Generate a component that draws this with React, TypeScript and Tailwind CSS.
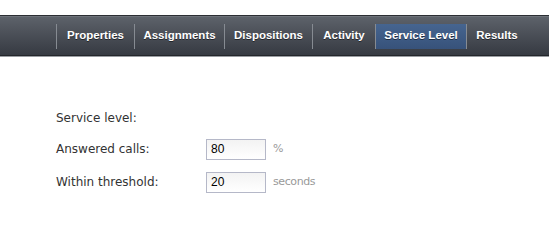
import React from "react";

const tabs: { label: string; w: string }[] = [
  { label: "Properties", w: "w-[78px]" },
  { label: "Assignments", w: "w-[90px]" },
  { label: "Dispositions", w: "w-[88px]" },
  { label: "Activity", w: "w-[63px]" },
  { label: "Service Level", w: "w-[91px]" },
  { label: "Results", w: "w-[61px]" },
];

export default function App() {
  return (
    <div className="w-[549px] h-[242px] bg-white overflow-hidden" style={{ fontFamily: "'DejaVu Sans', sans-serif" }}>
      <div className="h-[15px]" />
      <div className="h-[42px] border-t border-[#2b2e33] border-b border-b-[#9a9da2] bg-gradient-to-b from-[#5e636b] to-[#353941] shadow-[inset_0_-1px_0_#23262b,inset_0_1px_0_#6e737a] flex items-center pl-[56px]">
        {tabs.map((t) => (
          <div
            key={t.label}
            className={
              t.w +
              " h-[25px] flex items-center justify-center border-l border-[#868b92] text-white font-bold text-[11.5px] whitespace-nowrap " +
              (t.label === "Service Level" ? "bg-gradient-to-b from-[#466590] to-[#37527a]" : "")
            }
            style={{ fontFamily: "'Liberation Sans', sans-serif", textShadow: "0 1px 0 rgba(0,0,0,0.5)" }}
          >
            {t.label}
          </div>
        ))}
      </div>
      <div className="pl-[56px] pt-[51px] text-[12px] text-[#333]">
        <div className="h-[20px] flex items-center">Service level:</div>
        <div className="flex items-center mt-[10px] h-[22px]">
          <div className="w-[150px]">Answered calls:</div>
          <input
            defaultValue="80"
            className="w-[60px] h-[21px] border border-[#b5b8c8] bg-gradient-to-b from-[#f3f3f3] to-white px-[4px] text-[12px] text-black outline-none"
            style={{ fontFamily: "'Liberation Sans', sans-serif" }}
          />
          <span className="ml-[7px] text-[#999] text-[11px] tracking-[-0.4px]">%</span>
        </div>
        <div className="flex items-center mt-[11px] h-[22px]">
          <div className="w-[150px]">Within threshold:</div>
          <input
            defaultValue="20"
            className="w-[60px] h-[21px] border border-[#b5b8c8] bg-gradient-to-b from-[#f3f3f3] to-white px-[4px] text-[12px] text-black outline-none"
            style={{ fontFamily: "'Liberation Sans', sans-serif" }}
          />
          <span className="ml-[7px] text-[#999] text-[11px] tracking-[-0.4px]">seconds</span>
        </div>
      </div>
    </div>
  );
}
